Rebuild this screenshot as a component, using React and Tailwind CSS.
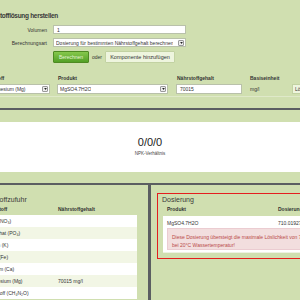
import React from "react";

function Arrow() {
  return (
    <span className="flex items-center justify-center w-[6px] h-[6px] border border-[#9a9a9a] bg-[#ececec] rounded-[1px] shrink-0">
      <svg width="3" height="2" viewBox="0 0 4 3"><path d="M0 0H4L2 3Z" fill="#222" /></svg>
    </span>
  );
}

function Select({ className = "", children }) {
  return (
    <div className={`flex items-center justify-between bg-white border border-[#b9c1aa] pl-[2px] pr-[1px] overflow-hidden whitespace-nowrap ${className}`}>
      <span className="overflow-hidden">{children}</span>
      <Arrow />
    </div>
  );
}

const rows = [
  ["Nitrat (NO₃)", ""],
  ["Phosphat (PO₄)", ""],
  ["Kalium (K)", ""],
  ["Eisen (Fe)", ""],
  ["Calcium (Ca)", ""],
  ["Magnesium (Mg)", "70015 mg/l"],
  ["Harnstoff (CH₄N₂O)", ""],
];

export default function App() {
  return (
    <div className="w-[300px] h-[300px] overflow-hidden bg-[#5b5e61] font-['Liberation_Sans',Arial,sans-serif] text-[#333] text-[5px] leading-[6px]">
      <div className="ml-[-24px] w-[348px]">
        {/* top panel */}
        <div className="bg-[#d0dfb0] h-[108px] pt-[12px]">
          <div className="pl-[7px] text-[6.5px] font-bold tracking-[-0.3px] leading-[8px] text-[#3a3a3a]">Nährstofflösung herstellen</div>
          <div className="mt-[5px] flex items-center h-[9px]">
            <div className="w-[71px] text-right">Volumen</div>
            <div className="ml-[6px] w-[133px] h-[9px] bg-white border border-[#b9c1aa] pl-[3px] flex items-center">1</div>
          </div>
          <div className="mt-[4px] flex items-center h-[9px]">
            <div className="w-[71px] text-right">Berechnungsart</div>
            <Select className="ml-[6px] w-[133px] h-[9px]">Dosierung für bestimmten Nährstoffgehalt berechnen</Select>
          </div>
          <div className="mt-[4px] flex items-center h-[12px] pl-[77px]">
            <div className="w-[36px] h-[12px] flex items-center justify-center rounded-[1px] border border-[#4e8a22] bg-gradient-to-b from-[#86c84c] to-[#52a025] text-[#e8f5d8]">Berechnen</div>
            <div className="ml-[3px] w-[13px]">oder</div>
            <div className="w-[70px] h-[12px] flex items-center justify-center rounded-[1px] border border-[#c2d2a2] bg-[#eef5de] text-[5.5px]">Komponente hinzufügen</div>
          </div>
          <div className="mt-[12px] flex h-[6px] font-bold whitespace-nowrap">
            <div className="w-[74px] pl-[6px]">Nährstoff</div>
            <div className="ml-[7px] w-[111px] pl-[1px]">Produkt</div>
            <div className="ml-[8px] w-[66px] pl-[1px]">Nährstoffgehalt</div>
            <div className="ml-[8px]">Basiseinheit</div>
          </div>
          <div className="mt-[3px] flex items-center h-[10px] whitespace-nowrap">
            <Select className="ml-[9px] w-[65px] h-[10px] shrink-0">Magnesium (Mg)</Select>
            <Select className="ml-[7px] w-[111px] h-[10px] shrink-0">MgSO4.7H2O</Select>
            <div className="ml-[8px] w-[66px] h-[10px] shrink-0 bg-white border border-[#b9c1aa] pl-[3px] flex items-center">70015</div>
            <div className="ml-[8px] w-[42px] shrink-0">mg/l</div>
            <div className="w-[30px] h-[10px] shrink-0 flex items-center pl-[2px] border border-[#c2d2a2] bg-[#eef5de]">Löschen</div>
          </div>
          <div className="mt-[2px] border-b border-[#dfe9c9]" />
        </div>

        {/* NPK panel */}
        <div className="mt-[2px] bg-[#d0dfb0] pt-[12px] pb-[11px]">
          <div className="h-[50px] bg-white flex flex-col items-center pt-[15px]">
            <div className="text-[11px] leading-[11px] text-[#222]">0/0/0</div>
            <div className="mt-[3px] text-[4.5px] leading-[5px] text-[#444]">NPK-Verhältnis</div>
          </div>
        </div>

        {/* bottom panels */}
        <div className="mt-[2px] flex h-[120px]">
          <div className="w-[172px] shrink-0 bg-[#d0dfb0] pt-[11px]">
            <div className="pl-[3px] text-[7px] leading-[8px] text-[#3a3a3a] whitespace-nowrap">Nährstoffzufuhr</div>
            <div className="mt-[2px] ml-[6px] flex h-[6px] font-bold whitespace-nowrap">
              <div className="w-[76px] pl-[3px]">Nährstoff</div>
              <div>Nährstoffgehalt</div>
            </div>
            <div className="mt-[3px] ml-[6px] w-[155px] bg-white">
              {rows.map(([n, v], i) => (
                <div key={n} className={`flex items-center h-[12px] whitespace-nowrap ${i % 2 ? "bg-[#f2f6e5]" : "bg-white"}`}>
                  <div className="w-[76px] pl-[3px]">{n}</div>
                  <div>{v}</div>
                </div>
              ))}
            </div>
          </div>
          <div className="ml-[3px] flex-1 min-w-0 bg-[#d0dfb0] pt-[8px] pl-[6px]">
            <div className="border border-[#e41e1e] pt-[2px] pb-[5px] pl-[4px] w-[230px]">
              <div className="text-[7px] leading-[8px] text-[#3a3a3a]">Dosierung</div>
              <div className="mt-[2px] flex h-[6px] font-bold whitespace-nowrap">
                <div className="w-[116px] pl-[5px]">Produkt</div>
                <div>Dosierung</div>
              </div>
              <div className="mt-[4px] bg-white pt-[2px] pb-[2px] ml-[1px] border-b border-[#eef2e2]">
                <div className="flex items-center h-[10px] whitespace-nowrap">
                  <div className="w-[115px] pl-[4px]">MgSO4.7H2O</div>
                  <div>710.0192771 g</div>
                </div>
                <div className="ml-[4px] h-[22px] bg-[#f2dede] border border-[#ebccd1] pl-[4px] pt-[4px] text-[#b94a48] leading-[8px] whitespace-nowrap">
                  Diese Dosierung übersteigt die maximale Löslichkeit von 710 g/l
                  <br />
                  bei 20°C Wassertemperatur!
                </div>
              </div>
            </div>
          </div>
        </div>
      </div>
    </div>
  );
}
